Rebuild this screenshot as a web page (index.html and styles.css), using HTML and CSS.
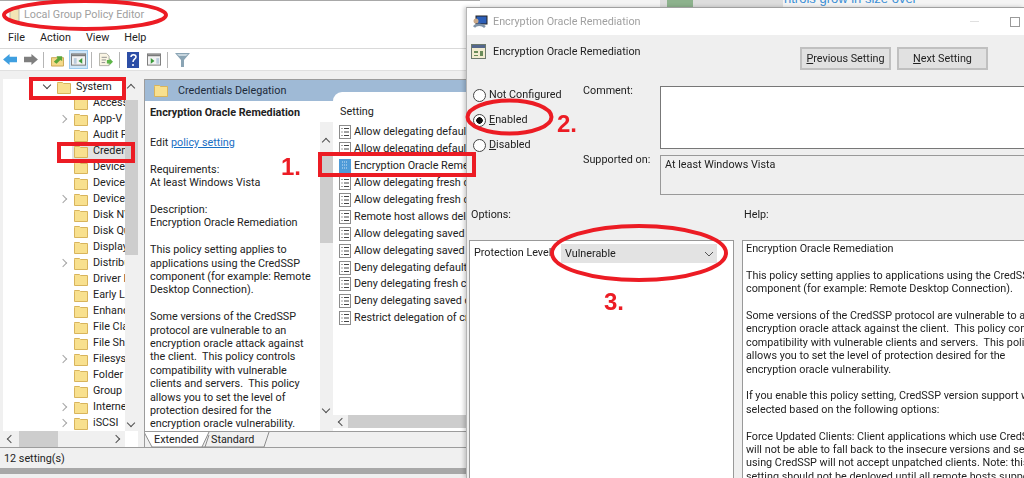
FILE: index.html
```html
<!DOCTYPE html>
<html lang="en">
<head>
    <meta charset="UTF-8">
    <title>Local Group Policy Editor</title>
    <link rel="stylesheet" href="styles.css">
</head>
<body>
    <svg width="0" height="0" class="defs">
        <symbol id="folder" viewBox="0 0 14 13">
            <path d="M.5 2.500V1.500h5l1 1h7v10H.5z" fill="#f8e08e" stroke="#d8b45c"/>
        </symbol>
        <symbol id="doc" viewBox="0 0 12 14">
            <rect x=".5" y=".5" width="11" height="13" fill="#fff" stroke="#8c8c8c"/>
            <path d="M2.500 3.500h1M5 3.500h5M2.500 7h1M5 7h5M2.500 10.500h1M5 10.500h5" stroke="#444"/>
        </symbol>
    </svg>

    <div class="backdrop">
        <span class="backdrop-tab"></span>
        <span class="backdrop-text">ntrols grow in size over</span>
    </div>

    <!-- main window -->
    <div class="window main-window">
        <div class="titlebar">
            <svg class="title-icon" width="12" height="14" viewBox="0 0 12 14"><path d="M1 1h9v12H1z" fill="#f3e5b5" stroke="#b9b9a8"/></svg>
            <span>Local Group Policy Editor</span>
        </div>
        <div class="menubar">
            <span>File</span><span>Action</span><span>View</span><span>Help</span>
        </div>
        <div class="toolbar">
            <svg width="15" height="13" viewBox="0 0 16 14"><path d="M0 7l7-6v3h8v6H7v3z" fill="#3f9fe0"/></svg>
            <svg class="tool-next" width="15" height="13" viewBox="0 0 16 14"><path d="M16 7L9 1v3H1v6h8v3z" fill="#7f7f7f"/></svg>
            <i class="tool-sep"></i>
            <svg class="tool-up" width="13" height="14" viewBox="0 0 14 14"><path d="M.5 4.500h13v9H.5z" fill="#f4d98a" stroke="#c9a550"/><path d="M3 9l4-4-1-2h6v5l-2-1-4 4z" fill="#5aa63a"/></svg>
            <span class="tool-active">
                <svg width="15" height="13" viewBox="0 0 16 13"><rect x=".5" y=".5" width="15" height="12" fill="#f2f2f2" stroke="#777"/><path d="M1 1h14v2H1z" fill="#7a7a7a"/><path d="M3 5h3v6H3z" fill="#bcd"/><path d="M12 5v6L8 8z" fill="#3a9b3a"/></svg>
            </span>
            <i class="tool-sep"></i>
            <svg class="tool-export" width="14" height="15" viewBox="0 0 16 15"><path d="M.5.500h8l3 3v11H.5z" fill="#faf5e4" stroke="#a9a9a0"/><path d="M3 5h6M3 8h5M3 11h4" stroke="#888"/><path d="M9 8h3V6l4 4-4 4v-2H9z" fill="#5eb548"/></svg>
            <i class="tool-sep"></i>
            <svg width="12" height="16" viewBox="0 0 12 16"><rect width="12" height="16" fill="#2c4ea6"/><path d="M4 5c0-3 5-3 5 0 0 2-3 2-3 5M6 12v2" stroke="#fff" stroke-width="1.500" fill="none"/></svg>
            <svg class="tool-props" width="14" height="13" viewBox="0 0 15 13"><rect x=".5" y=".5" width="14" height="12" fill="#f2f2f2" stroke="#777"/><path d="M1 1h13v2H1z" fill="#7a7a7a"/><path d="M4 5v6l4-3z" fill="#3a9b3a"/><path d="M10 5h3v6h-3z" fill="#bcd"/></svg>
            <i class="tool-sep"></i>
            <svg class="tool-filter" width="15" height="14" viewBox="0 0 15 14"><path d="M0 0h15L9 7v7H6V7z" fill="#8aa4b4"/><path d="M2 1h11l-2 2H4z" fill="#c6d5de"/></svg>
        </div>

        <div class="workspace">
            <div class="tree-pane">
                <div class="tree-view">
                    <ul class="tree">
                        <li class="tree-root"><b class="chev-down"></b><svg class="fold"><use href="#folder"/></svg>System</li>
                        <li><svg class="fold"><use href="#folder"/></svg>Access</li>
                        <li class="has-kids"><svg class="fold"><use href="#folder"/></svg>App-V</li>
                        <li><svg class="fold"><use href="#folder"/></svg>Audit Process</li>
                        <li class="is-selected"><svg class="fold"><use href="#folder"/></svg>Credentials</li>
                        <li><svg class="fold"><use href="#folder"/></svg>Device Guard</li>
                        <li><svg class="fold"><use href="#folder"/></svg>Device Health</li>
                        <li class="has-kids"><svg class="fold"><use href="#folder"/></svg>Device Installation</li>
                        <li><svg class="fold"><use href="#folder"/></svg>Disk NV Cache</li>
                        <li><svg class="fold"><use href="#folder"/></svg>Disk Quotas</li>
                        <li><svg class="fold"><use href="#folder"/></svg>Display</li>
                        <li class="has-kids"><svg class="fold"><use href="#folder"/></svg>Distributed</li>
                        <li><svg class="fold"><use href="#folder"/></svg>Driver Installation</li>
                        <li><svg class="fold"><use href="#folder"/></svg>Early Launch</li>
                        <li><svg class="fold"><use href="#folder"/></svg>Enhanced</li>
                        <li><svg class="fold"><use href="#folder"/></svg>File Classification</li>
                        <li><svg class="fold"><use href="#folder"/></svg>File Share</li>
                        <li class="has-kids"><svg class="fold"><use href="#folder"/></svg>Filesystem</li>
                        <li><svg class="fold"><use href="#folder"/></svg>Folder Redirection</li>
                        <li><svg class="fold"><use href="#folder"/></svg>Group Policy</li>
                        <li class="has-kids"><svg class="fold"><use href="#folder"/></svg>Internet</li>
                        <li class="has-kids"><svg class="fold"><use href="#folder"/></svg>iSCSI</li>
                    </ul>
                    <div class="vscroll tree-scroll">
                        <span class="arrow-up"></span>
                        <span class="thumb tree-thumb"></span>
                        <span class="arrow-down"></span>
                    </div>
                </div>
                <div class="hscroll">
                    <span class="arrow-left"></span>
                    <span class="hthumb"></span>
                    <span class="arrow-right"></span>
                </div>
            </div>

            <div class="detail-pane">
                <div class="detail-head">
                    <svg class="head-folder"><use href="#folder"/></svg>
                    <span>Credentials Delegation</span>
                </div>
                <div class="detail-body">
                    <div class="description">
                        <h3>Encryption Oracle Remediation</h3>
                        <p>Edit <a>policy setting </a></p>
                        <p>Requirements:<br>At least Windows Vista</p>
                        <p>Description:<br>Encryption Oracle Remediation</p>
                        <p>This policy setting applies to<br>applications using the CredSSP<br>component (for example: Remote<br>Desktop Connection).</p>
                        <p>Some versions of the CredSSP<br>protocol are vulnerable to an<br>encryption oracle attack against<br>the client.&nbsp; This policy controls<br>compatibility with vulnerable<br>clients and servers.&nbsp; This policy<br>allows you to set the level of<br>protection desired for the<br>encryption oracle vulnerability.</p>
                    </div>
                    <div class="vscroll desc-scroll">
                        <span class="arrow-up"></span>
                        <span class="thumb desc-thumb"></span>
                        <span class="arrow-down"></span>
                    </div>
                    <div class="settings">
                        <div class="settings-head">Setting</div>
                        <ul class="settings-list">
                            <li><svg class="doc"><use href="#doc"/></svg>Allow delegating default credentials</li>
                            <li><svg class="doc"><use href="#doc"/></svg>Allow delegating default credentials</li>
                            <li><svg class="doc doc-blue" viewBox="0 0 12 14"><rect width="12" height="14" fill="#4f9bd8"/><path d="M3 3h6M3 6h6M3 9h6" stroke="#cfe4f5" stroke-dasharray="1 1"/></svg>Encryption Oracle Remediation</li>
                            <li><svg class="doc"><use href="#doc"/></svg>Allow delegating fresh credentials</li>
                            <li><svg class="doc"><use href="#doc"/></svg>Allow delegating fresh credentials</li>
                            <li><svg class="doc"><use href="#doc"/></svg>Remote host allows delegation</li>
                            <li><svg class="doc"><use href="#doc"/></svg>Allow delegating saved credentials</li>
                            <li><svg class="doc"><use href="#doc"/></svg>Allow delegating saved credentials</li>
                            <li><svg class="doc"><use href="#doc"/></svg>Deny delegating default credentials</li>
                            <li><svg class="doc"><use href="#doc"/></svg>Deny delegating fresh credentials</li>
                            <li><svg class="doc"><use href="#doc"/></svg>Deny delegating saved credentials</li>
                            <li><svg class="doc"><use href="#doc"/></svg>Restrict delegation of credentials</li>
                        </ul>
                        <div class="settings-hscroll"><span class="arrow-left"></span><span class="list-hthumb"></span></div>
                    </div>
                </div>
                <div class="tabs">
                    <svg class="tab-lines" width="160" height="16" viewBox="0 0 160 16">
                        <path d="M-1 0L7 15H57L64 0z" fill="#fff"/>
                        <path d="M-1 0L7 15H57L64 0M57 15H60M60 15L64 3M124 0L119 15H60" fill="none" stroke="#8c8c8c"/>
                    </svg>
                    <span class="tab">Extended</span>
                    <span class="tab">Standard</span>
                </div>
            </div>
        </div>
        <div class="statusbar">12 setting(s)</div>
    </div>

    <!-- policy dialog -->
    <div class="window dialog">
        <div class="titlebar dialog-title">
            <svg class="dialog-icon" width="15" height="14" viewBox="0 0 15 14"><rect x="3" y="1" width="11" height="8" fill="#2c5fb8" stroke="#222"/><path d="M1 12c2-3 8-3 11 0" stroke="#7f93a8" stroke-width="2.500" fill="none"/><circle cx="3" cy="6" r="2.500" fill="#c9a888"/></svg>
            <span>Encryption Oracle Remediation</span>
            <i class="win-min"></i>
            <i class="win-max"></i>
        </div>
        <div class="dialog-body">
            <div class="dialog-head">
                <div class="head-name">
                    <svg width="15" height="15" viewBox="0 0 15 15"><rect x=".5" y=".5" width="14" height="14" fill="#f2ecd0" stroke="#6d7a6d"/><path d="M1 1h13v3H1z" fill="#54678c"/><path d="M3 7h4v2H3zM9 7h3v5H9zM3 11h4v1H3z" fill="#6a8c5a"/></svg>
                    <span>Encryption Oracle Remediation</span>
                </div>
                <div class="head-buttons">
                    <button><u>P</u>revious Setting</button>
                    <button><u>N</u>ext Setting</button>
                </div>
            </div>
            <div class="state-row">
                <div class="radios">
                    <label><i class="radio"></i><span>Not <u>C</u>onfigured</span></label>
                    <label><i class="radio radio-on"></i><span><u>E</u>nabled</span></label>
                    <label><i class="radio"></i><span><u>D</u>isabled</span></label>
                </div>
                <div class="state-fields">
                    <div class="field-row comment-row">
                        <span class="field-label">Comment:</span>
                        <div class="comment-box"></div>
                    </div>
                    <div class="field-row supported-row">
                        <span class="field-label">Supported on:</span>
                        <div class="supported-box">At least Windows Vista</div>
                    </div>
                </div>
            </div>
            <div class="split-labels">
                <span class="options-label">Options:</span>
                <span>Help:</span>
            </div>
            <div class="split">
                <div class="options-box">
                    <span>Protection Level</span>
                    <div class="select">Vulnerable<svg width="10" height="6" viewBox="0 0 10 6"><path d="M1 1l4 4 4-4" stroke="#555" fill="none"/></svg></div>
                </div>
                <div class="help-box">
                    <p>Encryption Oracle Remediation</p>
                    <p>This policy setting applies to applications using the CredSSP<br>component (for example: Remote Desktop Connection).</p>
                    <p>Some versions of the CredSSP protocol are vulnerable to an<br>encryption oracle attack against the client.&nbsp; This policy controls<br>compatibility with vulnerable clients and servers.&nbsp; This policy<br>allows you to set the level of protection desired for the<br>encryption oracle vulnerability.</p>
                    <p>If you enable this policy setting, CredSSP version support will be<br>selected based on the following options:</p>
                    <p>Force Updated Clients: Client applications which use CredSSP<br>will not be able to fall back to the insecure versions and services<br>using CredSSP will not accept unpatched clients. Note: this<br>setting should not be deployed until all remote hosts support</p>
                </div>
            </div>
        </div>
    </div>

    <!-- red annotations drawn on the screenshot -->
    <svg class="marks" width="1024" height="478" viewBox="0 0 1024 478">
        <g fill="none" stroke="#ec1c24" stroke-width="4">
            <ellipse cx="85" cy="15" rx="81" ry="14"/>
            <rect x="31" y="79" width="93" height="19"/>
            <rect x="59" y="144" width="74" height="17"/>
            <rect x="320" y="154" width="154" height="21"/>
            <ellipse cx="509.500" cy="117" rx="42" ry="16.500"/>
            <ellipse cx="639" cy="253" rx="87" ry="27"/>
        </g>
    </svg>
    <span class="step step-one">1.</span>
    <span class="step step-two">2.</span>
    <span class="step step-three">3.</span>
</body>
</html>
```

FILE: styles.css
```css
html, body {
    margin: 0;
    padding: 0;
    height: 100%;
    overflow: hidden;
}
body {
    position: relative;
    width: 1024px;
    height: 478px;
    background-color: #f0f0f0;
    color: #222;
    font-family: Roboto, "Noto Sans", sans-serif;
    font-size: 10.800px;
    line-height: 16px;
    filter: blur(0.3px);
}
.defs {
    position: absolute;
}
ul {
    list-style: none;
    margin: 0;
    padding: 0;
}
p {
    margin: 0;
}

/* desktop behind the windows */
.backdrop {
    position: absolute;
    left: 0;
    top: 0;
    width: 1024px;
    height: 7px;
    background-color: #f4f4f4;
    overflow: hidden;
}
.backdrop-tab {
    position: absolute;
    left: 660px;
    top: 0;
    width: 123px;
    height: 7px;
    background: linear-gradient(90deg, #ddd 0 6%, #8db28d 6% 27%, #ddd 27%);
}
.backdrop-text {
    position: absolute;
    left: 784px;
    top: -9px;
    padding-right: 4px;
    color: #3b8fd6;
    font-family: "Liberation Sans", sans-serif;
    font-size: 13px;
}

.window {
    position: absolute;
}
.main-window {
    left: 0;
    top: 0;
    width: 480px;
    height: 468px;
    display: flex;
    flex-direction: column;
    box-sizing: border-box;
    background-color: #f0f0f0;
    border-top: 1px solid #a8a8a8;
    box-shadow: 0 6px 0 #a8a8a8;
}
.titlebar {
    height: 27px;
    flex: none;
    display: flex;
    align-items: center;
    background-color: #fff;
    color: #a0a0a0;
}
.title-icon {
    margin: 0 3px 0 9px;
}
.menubar {
    height: 20px;
    flex: none;
    display: flex;
    gap: 15px;
    padding-left: 8px;
    align-items: center;
    background-color: #fff;
    border-bottom: 1px solid #d9d9d9;
}
.toolbar {
    height: 21px;
    flex: none;
    display: flex;
    align-items: center;
    padding-left: 3px;
    background-color: #fff;
    border-bottom: 1px solid #e0e0e0;
}
.tool-next {
    margin-left: 5px;
}
.tool-sep {
    width: 1px;
    height: 16px;
    margin: 0 7px 0 5px;
    background-color: #b5b5b5;
}
.tool-up {
    margin-right: 5px;
}
.tool-active {
    display: flex;
    align-items: center;
    justify-content: center;
    width: 19px;
    height: 19px;
    box-sizing: border-box;
    background-color: #cfe6f8;
    border: 1px solid #9ccbee;
    margin-right: -2px;
}
.tool-export {
    margin-right: 1px;
}
.tool-props {
    margin: 0 1px 0 8px;
}

.workspace {
    flex: 1;
    display: flex;
    gap: 6px;
    padding: 8px 0 0 3px;
    min-height: 0;
    background-color: #f0f0f0;
    border-bottom: 1px solid #9c9c9c;
}

/* tree on the left */
.tree-pane {
    width: 135px;
    flex: none;
    display: flex;
    flex-direction: column;
    background-color: #fff;
}
.tree-view {
    flex: 1;
    display: flex;
    min-height: 0;
    overflow: hidden;
}
.tree {
    flex: 1;
    min-width: 0;
    overflow: hidden;
}
.tree li {
    position: relative;
    display: flex;
    align-items: center;
    height: 16px;
    padding-left: 71px;
    white-space: nowrap;
    overflow: hidden;
}
.tree .fold {
    width: 14px;
    height: 13px;
    flex: none;
    margin-right: 5px;
}
.tree .tree-root {
    padding-left: 54px;
}
.tree .is-selected {
    background-color: #e3e3e3;
    margin-left: 69px;
    padding-left: 2px;
}
.has-kids::before {
    content: "";
    position: absolute;
    left: 57px;
    top: 5px;
    width: 5px;
    height: 5px;
    border: solid #a6a6a6;
    border-width: 1px 1px 0 0;
    transform: rotate(45deg);
}
.chev-down {
    position: absolute;
    left: 41px;
    top: 3px;
    width: 5px;
    height: 5px;
    border: solid #444;
    border-width: 0 1.500px 1.500px 0;
    transform: rotate(45deg);
}
.vscroll {
    width: 13px;
    flex: none;
    display: flex;
    flex-direction: column;
    position: relative;
    background-color: #f0f0f0;
}
.thumb {
    display: block;
    background-color: #cdcdcd;
}
.tree-thumb {
    height: 155px;
    margin-top: 21px;
}
.desc-scroll {
    margin-top: 21px;
}
.desc-thumb {
    height: 88px;
    margin-top: 33px;
}
.arrow-up::after, .arrow-down::after {
    content: "";
    position: absolute;
    left: 3px;
    width: 5px;
    height: 5px;
    border: solid #505050;
    border-width: 1.500px 0 0 1.500px;
    transform: rotate(45deg);
}
.arrow-up::after {
    top: 6px;
}
.arrow-down::after {
    bottom: 5px;
    transform: rotate(225deg);
}
.desc-scroll .arrow-up::after {
    top: 17px;
}
.desc-scroll .arrow-down::after {
    bottom: 19px;
}
.hscroll {
    height: 16px;
    flex: none;
    position: relative;
    background-color: #f0f0f0;
    margin-right: 13px;
}
.arrow-left, .arrow-right {
    position: absolute;
    top: 5px;
    width: 5px;
    height: 5px;
    border: solid #505050;
    border-width: 0 0 1.500px 1.500px;
    transform: rotate(45deg);
}
.arrow-left {
    left: 5px;
}
.arrow-right {
    left: 110px;
    transform: rotate(225deg);
}
.hthumb {
    position: absolute;
    left: 16px;
    top: 0;
    width: 39px;
    height: 16px;
    background-color: #cdcdcd;
}

/* detail panel */
.detail-pane {
    flex: 1;
    min-width: 0;
    display: flex;
    flex-direction: column;
    background-color: #fff;
    border-left: 1px solid #9c9c9c;
    border-top: 1px solid #9c9c9c;
}
.detail-head {
    height: 21px;
    flex: none;
    display: flex;
    align-items: center;
    padding-left: 9px;
    background-color: #9fbad6;
    color: #1d2a3a;
}
.head-folder {
    width: 14px;
    height: 13px;
    margin-right: 10px;
}
.detail-body {
    flex: 1;
    min-height: 0;
    display: flex;
}
.description {
    width: 175px;
    flex: none;
    padding: 2px 0 0 5px;
    overflow: hidden;
    white-space: nowrap;
    box-sizing: border-box;
    line-height: 13.400px;
}
.description h3 {
    margin: 3px 0 16px;
    font-size: 10.800px;
    line-height: 14px;
    font-weight: 700;
}
.description p {
    margin-bottom: 13.400px;
}
.description a {
    color: #1a6fc4;
    text-decoration: underline;
}
.settings {
    position: relative;
    flex: 1;
    min-width: 0;
    display: flex;
    flex-direction: column;
    margin-top: -9px;
    overflow: hidden;
    background-color: #fff;
    border-top-left-radius: 9px;
}
.settings-head {
    height: 32px;
    flex: none;
    padding: 12px 0 0 7px;
    box-sizing: border-box;
}
.settings-list {
    flex: 1;
    min-height: 0;
}
.settings-list li {
    display: flex;
    align-items: center;
    height: 16.900px;
    white-space: nowrap;
    padding-left: 6px;
}
.doc {
    width: 12px;
    height: 14px;
    flex: none;
    margin-right: 3px;
}
.settings-hscroll {
    height: 13px;
    flex: none;
    position: relative;
    display: block;
    margin-bottom: 3px;
    background-color: #f0f0f0;
}
.list-hthumb {
    display: block;
    height: 13px;
    margin-left: 15px;
    background-color: #cdcdcd;
}
.settings-hscroll .arrow-left {
    left: 6px;
    top: 4px;
}
.tabs {
    position: relative;
    height: 16px;
    flex: none;
    display: flex;
    padding-left: 9px;
    box-sizing: border-box;
    background-color: #f0f0f0;
    border-top: 1px solid #9c9c9c;
}
.tab-lines {
    position: absolute;
    left: 0;
    top: 0;
}
.tab {
    position: relative;
    width: 57px;
    line-height: 15px;
    white-space: nowrap;
}
.statusbar {
    height: 20px;
    flex: none;
    padding: 3px 0 0 4px;
    box-sizing: border-box;
    background-color: #f0f0f0;
}

/* dialog */
.dialog {
    left: 466px;
    top: 7px;
    width: 558px;
    height: 471px;
    display: flex;
    flex-direction: column;
    background-color: #efefef;
    border-top: 1px solid #a0a0a0;
    border-left: 1px solid #b5b5b5;
    box-sizing: border-box;
    box-shadow: -2px 0 4px rgba(0, 0, 0, 0.2);
}
.dialog-title {
    padding-left: 6px;
}
.dialog-icon {
    margin-right: 5px;
}
.win-min {
    width: 9px;
    height: 1px;
    margin-left: auto;
    background-color: #e0e0e0;
}
.win-max {
    width: 8px;
    height: 8px;
    margin: 0 4px 0 31px;
    border: 1px solid #9a9a9a;
}
.dialog-body {
    flex: 1;
    min-height: 0;
    display: flex;
    flex-direction: column;
    padding-left: 2px;
}
.dialog-head {
    height: 43px;
    flex: none;
    display: flex;
    padding: 9px 36px 0 2px;
    box-sizing: border-box;
}
.head-name {
    display: flex;
    align-items: flex-start;
    gap: 7px;
    line-height: 15px;
}
.head-buttons {
    margin-left: auto;
    display: flex;
    gap: 6px;
    margin-top: 3px;
}
.head-buttons button {
    width: 91px;
    height: 23px;
    padding: 0;
    background-color: #e1e1e1;
    border: 2px solid #c0c0c0;
    color: #222;
    font: inherit;
}
.state-row {
    height: 122px;
    flex: none;
    display: flex;
}
.radios {
    width: 114px;
    flex: none;
    display: flex;
    flex-direction: column;
    padding: 4.500px 0 0 4px;
    box-sizing: border-box;
}
.radios label {
    display: flex;
    align-items: center;
    gap: 3px;
    height: 25px;
    white-space: nowrap;
}
.radio {
    width: 11px;
    height: 11px;
    border: 1px solid #444;
    border-radius: 50%;
    background-color: #fff;
    flex: none;
    display: block;
}
.radio-on {
    background: radial-gradient(circle, #111 0 3px, #fff 3.500px);
}
.state-fields {
    flex: 1;
    display: flex;
    flex-direction: column;
    gap: 6px;
    padding-top: 8px;
}
.field-row {
    display: flex;
}
.field-label {
    width: 77px;
    flex: none;
    margin-top: -3px;
    white-space: nowrap;
}
.comment-box {
    flex: 1;
    height: 63px;
    background-color: #fff;
    border: 1px solid #777;
    border-right: none;
    box-sizing: border-box;
}
.supported-box {
    flex: 1;
    height: 40px;
    box-sizing: border-box;
    padding: 1px 0 0 4px;
    border: 1px solid #999;
    border-right: none;
}
.split-labels {
    height: 40px;
    flex: none;
    display: flex;
    padding: 7px 0 0 2px;
    box-sizing: border-box;
}
.options-label {
    width: 273px;
}
.split {
    flex: 1;
    min-height: 0;
    display: flex;
    gap: 8px;
}
.options-box {
    width: 265px;
    flex: none;
    display: flex;
    align-items: flex-start;
    padding: 3px 0 0 4px;
    box-sizing: border-box;
    background-color: #fff;
    border: 1px solid #999;
    border-bottom: none;
}
.options-box span {
    width: 87px;
    flex: none;
    padding-top: 1px;
    white-space: nowrap;
}
.select {
    width: 156px;
    height: 19px;
    display: flex;
    align-items: center;
    justify-content: space-between;
    padding: 0 3px 0 4px;
    box-sizing: border-box;
    background-color: #e3e3e3;
}
.help-box {
    flex: 1;
    min-width: 0;
    padding: 1px 0 0 3px;
    background-color: #fff;
    border: 1px solid #999;
    border-right: none;
    border-bottom: none;
    white-space: nowrap;
    overflow: hidden;
    line-height: 13.400px;
}
.help-box p {
    margin-bottom: 13.400px;
}

/* annotations */
.marks {
    position: absolute;
    left: 0;
    top: 0;
}
.step {
    position: absolute;
    color: #ec1c24;
    font-family: "Liberation Sans", sans-serif;
    font-size: 24px;
    font-weight: 700;
    line-height: 24px;
}
.step-one {
    left: 281px;
    top: 155px;
}
.step-two {
    left: 557px;
    top: 112px;
}
.step-three {
    left: 604px;
    top: 290px;
}
```
